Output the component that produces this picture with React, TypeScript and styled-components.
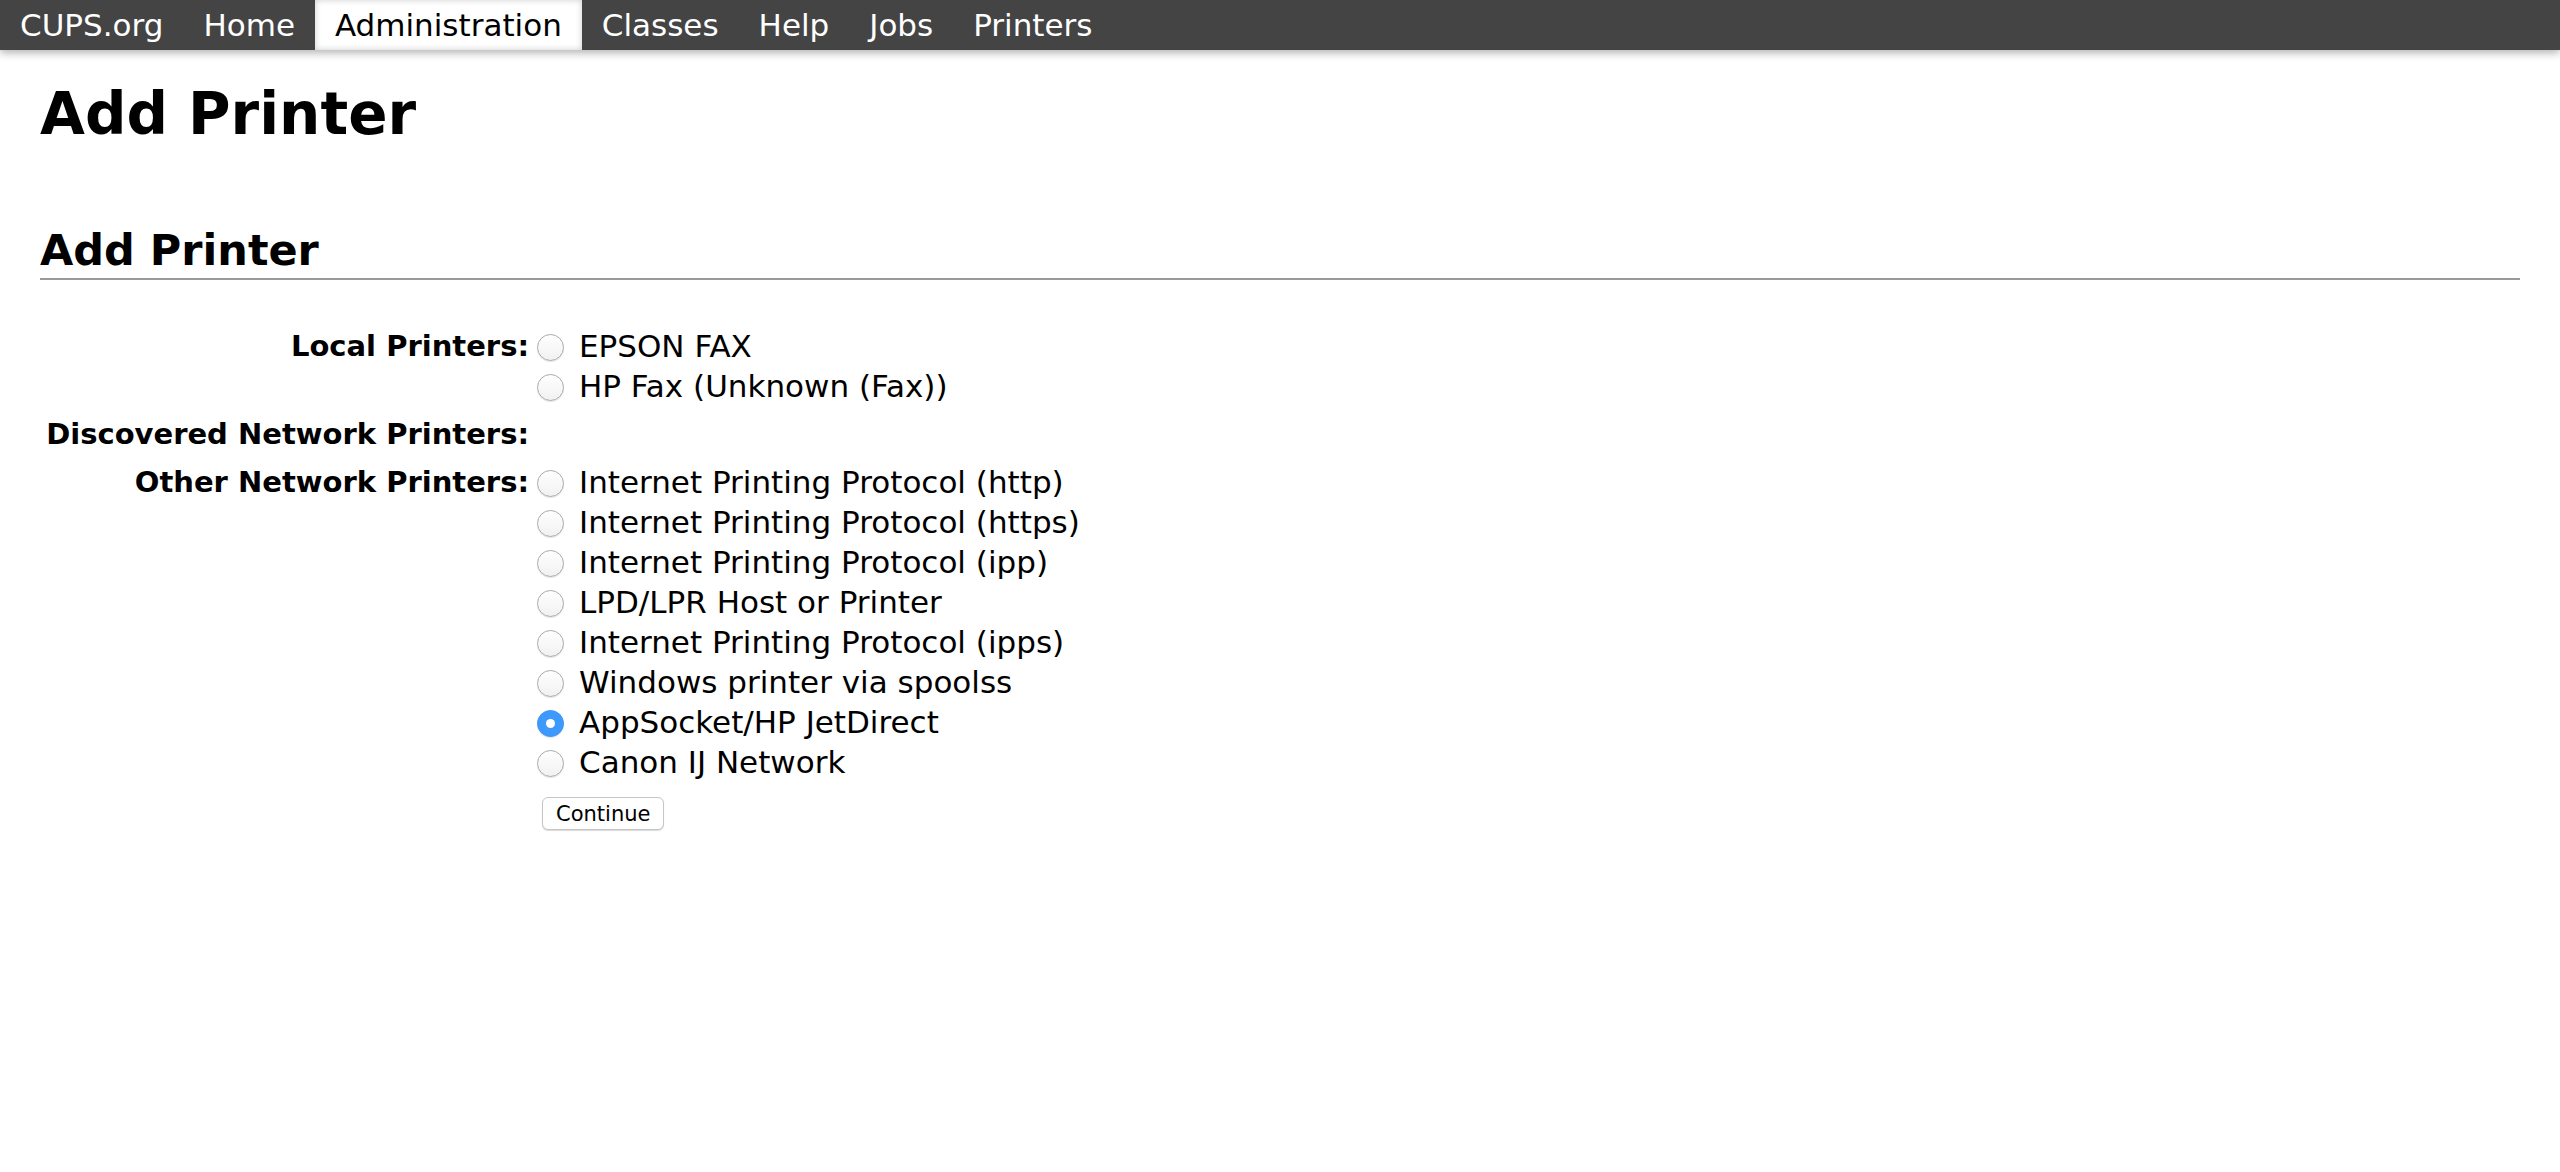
import React from 'react';
import styled, { createGlobalStyle } from 'styled-components';

const GlobalStyle = createGlobalStyle`
  html, body {
    margin: 0;
    padding: 0;
    background: #fff;
  }
  body {
    font-family: "DejaVu Sans", "Liberation Sans", sans-serif;
    color: #000;
  }
`;

const Header = styled.nav`
  display: flex;
  height: 50px;
  background: #444;
  box-shadow: 0 3px 8px rgba(0, 0, 0, 0.3);
  position: relative;
  z-index: 1;
`;

const NavItem = styled.a<{ $active?: boolean }>`
  display: block;
  padding: 0 20px;
  line-height: 50px;
  font-size: 31px;
  text-decoration: none;
  color: ${(p) => (p.$active ? '#000' : '#fff')};
  background: ${(p) => (p.$active ? '#fff' : 'transparent')};
  box-shadow: ${(p) => (p.$active ? 'inset 0 0 6px rgba(0, 0, 0, 0.2)' : 'none')};
`;

const Body = styled.main`
  padding: 0 40px;
`;

const PageTitle = styled.h1`
  margin: 29px 0 0;
  font-size: 58px;
  line-height: 70px;
  font-weight: bold;
`;

const SectionTitle = styled.h2`
  margin: 79px 0 0;
  padding-bottom: 6px;
  font-size: 43px;
  line-height: 44px;
  font-weight: bold;
  border-bottom: 2px solid #999;
`;

const Form = styled.form`
  margin-top: 42px;
  display: grid;
  grid-template-columns: 497px 1fr;
`;

const Label = styled.div`
  padding: 4px 8px 4px 0;
  text-align: right;
  font-weight: bold;
  font-size: 29px;
  line-height: 40px;
`;

const Value = styled.div`
  padding: 4px 0;
  display: flex;
  flex-direction: column;
`;

const Option = styled.label`
  display: flex;
  align-items: center;
  height: 40px;
  font-size: 31px;
  line-height: 40px;
  white-space: nowrap;
`;

const Radio = styled.input`
  appearance: none;
  -webkit-appearance: none;
  margin: 2px 15px 0 0;
  width: 27px;
  height: 27px;
  flex: none;
  border-radius: 50%;
  border: 1px solid #a9a9a9;
  background: linear-gradient(#ffffff, #f1f1f1);
  box-shadow: 0 1px 1px rgba(0, 0, 0, 0.1);
  box-sizing: border-box;
  position: relative;
  &:checked {
    border-color: #3a95f7;
    background: #3d99fb;
  }
  &:checked::after {
    content: '';
    position: absolute;
    left: 50%;
    top: 50%;
    width: 9px;
    height: 9px;
    margin: -4.5px 0 0 -4.5px;
    border-radius: 50%;
    background: #fff;
  }
`;

const Button = styled.button`
  margin: 7px 0 0 5px;
  height: 33px;
  padding: 0 13px;
  font-family: "DejaVu Sans", "Liberation Sans", sans-serif;
  font-size: 21px;
  color: #000;
  background: #fff;
  border: 1px solid #c6c6c6;
  border-radius: 6px;
  box-shadow: 0 1px 1px rgba(0, 0, 0, 0.15);
  align-self: flex-start;
`;

const navItems = ['CUPS.org', 'Home', 'Administration', 'Classes', 'Help', 'Jobs', 'Printers'];

const localPrinters = ['EPSON FAX', 'HP Fax (Unknown (Fax))'];
const otherPrinters = [
  'Internet Printing Protocol (http)',
  'Internet Printing Protocol (https)',
  'Internet Printing Protocol (ipp)',
  'LPD/LPR Host or Printer',
  'Internet Printing Protocol (ipps)',
  'Windows printer via spoolss',
  'AppSocket/HP JetDirect',
  'Canon IJ Network',
];

export default function App() {
  const [selected, setSelected] = React.useState('AppSocket/HP JetDirect');
  return (
    <>
      <GlobalStyle />
      <Header>
        {navItems.map((n) => (
          <NavItem key={n} href="#" $active={n === 'Administration'}>
            {n}
          </NavItem>
        ))}
      </Header>
      <Body>
        <PageTitle>Add Printer</PageTitle>
        <SectionTitle>Add Printer</SectionTitle>
        <Form onSubmit={(e) => e.preventDefault()}>
          <Label>Local Printers:</Label>
          <Value>
            {localPrinters.map((p) => (
              <Option key={p}>
                <Radio
                  type="radio"
                  name="device"
                  checked={selected === p}
                  onChange={() => setSelected(p)}
                />
                {p}
              </Option>
            ))}
          </Value>
          <Label>Discovered Network Printers:</Label>
          <Value />
          <Label>Other Network Printers:</Label>
          <Value>
            {otherPrinters.map((p) => (
              <Option key={p}>
                <Radio
                  type="radio"
                  name="device"
                  checked={selected === p}
                  onChange={() => setSelected(p)}
                />
                {p}
              </Option>
            ))}
          </Value>
          <div />
          <Value>
            <Button type="submit">Continue</Button>
          </Value>
        </Form>
      </Body>
    </>
  );
}
